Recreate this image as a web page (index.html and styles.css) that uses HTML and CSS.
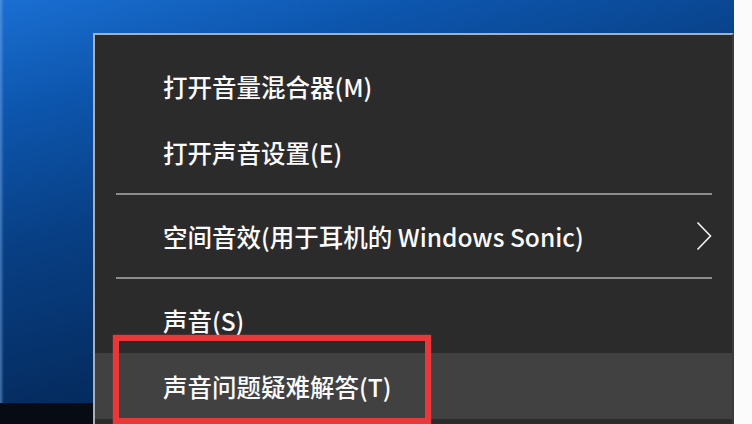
FILE: index.html
```html
<!DOCTYPE html>
<html lang="zh-CN">
<head>
<meta charset="utf-8">
<title>声音菜单</title>
<link rel="stylesheet" href="styles.css">
</head>
<body>
<div class="screen">
  <div class="taskbar"></div>
  <div class="menu">
    <div class="item"><span class="label">打开音量混合器(M)</span></div>
    <div class="item"><span class="label">打开声音设置(E)</span></div>
    <div class="sep"></div>
    <div class="item">
      <span class="label">空间音效(用于耳机的 Windows Sonic)</span>
      <svg class="chev" width="16" height="30" viewBox="0 0 16 30"><path d="M1.5 1.5 L14.5 15 L1.5 28.5" fill="none" stroke="#f4f4f4" stroke-width="1.6"/></svg>
    </div>
    <div class="sep"></div>
    <div class="item"><span class="label">声音(S)</span></div>
    <div class="item hover"><span class="label">声音问题疑难解答(T)</span></div>
    <div class="mark"></div>
  </div>
  <div class="strip"></div>
</div>
</body>
</html>
```

FILE: styles.css
```css
html, body {
  margin: 0;
  padding: 0;
}
body {
  width: 752px;
  height: 424px;
  overflow: hidden;
  background: #fff;
  font-family: "Noto Sans CJK SC", "Microsoft YaHei", "Noto Sans", sans-serif;
}
.screen {
  width: 752px;
  height: 424px;
  display: grid;
  grid-template-columns: 93px 641px 18px;
  grid-template-rows: 33px 370px 21px;
  background:
    linear-gradient(90deg, rgba(120,170,230,0.55) 0px, rgba(120,170,230,0) 4px),
    linear-gradient(165deg, #1a6fd2 0%, #0d56ae 18%, #083f84 40%, #052d62 65%, #03204c 100%);
  overflow: hidden;
}
.taskbar {
  grid-column: 1;
  grid-row: 3;
  background: #070b14;
}
.menu {
  grid-column: 2;
  grid-row: 2 / 4;
  position: relative;
  background: #2b2b2b;
  border-top: 2px solid #a6b0bc;
  border-left: 2px solid #a6b0bc;
  border-right: 2px solid #3a3a3a;
  padding-top: 18px;
  box-sizing: border-box;
}
.item {
  height: 66px;
  display: flex;
  align-items: center;
  justify-content: space-between;
  padding-left: 68px;
  padding-right: 20px;
  color: #fafafa;
  font-size: 24.5px;
  font-weight: 500;
}
.item.hover {
  background: #414141;
}
.label {
  white-space: nowrap;
}
.chev {
  display: block;
}
.sep {
  height: 2px;
  margin: 8px 20px 8px 21px;
  background: #8c8c8c;
}
.mark {
  position: absolute;
  left: 18px;
  top: 300px;
  width: 318px;
  height: 89px;
  box-sizing: border-box;
  border: 6px solid #e8383a;
  box-shadow: 0 0 2px rgba(232,56,58,0.6);
}
.strip {
  grid-column: 3;
  grid-row: 1 / 4;
  background: #fbfbfb;
}
```
